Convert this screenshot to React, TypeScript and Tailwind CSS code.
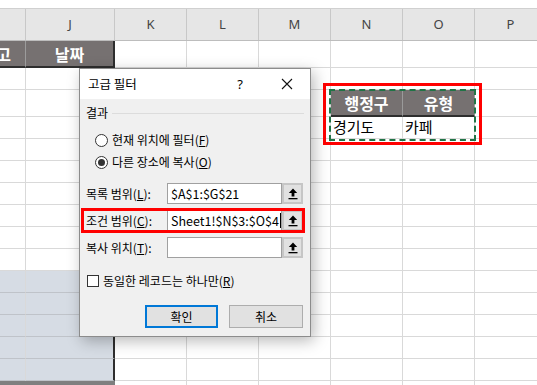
import React from "react";

const font = "font-['Noto_Sans_CJK_KR','Noto_Sans',sans-serif]";

const cols = [
  { key: "I", w: "w-[26px]", label: "" },
  { key: "J", w: "w-[89px]", label: "J" },
  { key: "K", w: "w-[72px]", label: "K" },
  { key: "L", w: "w-[72px]", label: "L" },
  { key: "M", w: "w-[72px]", label: "M" },
  { key: "N", w: "w-[72px]", label: "N" },
  { key: "O", w: "w-[72px]", label: "O" },
  { key: "P", w: "w-[72px]", label: "P" },
];

const rows = Array.from({ length: 16 }, (_, i) => i + 1);

const RefIcon = () => (
  <svg width="10" height="12" viewBox="0 0 10 12">
    <path d="M5 0.5 L9.2 5 H6.4 V8.6 H3.6 V5 H0.8 Z" fill="#000" />
    <rect x="0.5" y="10" width="9" height="1.3" fill="#000" />
  </svg>
);

const Cell = ({ r, c }: { r: number; c: number }) => {
  const w = cols[c].w;
  if (r === 1 && c === 0) {
    return (
      <div className={`${w} shrink-0 h-full bg-[#767171] border-r border-[#9c9c9c] border-b-2 border-b-[#2e2e2e] flex items-center justify-end pr-[14px] overflow-hidden whitespace-nowrap text-white font-bold text-[16px]`}>
        비고
      </div>
    );
  }
  if (r === 1 && c === 1) {
    return (
      <div className={`${w} shrink-0 h-full bg-[#767171] border-r-2 border-r-[#2e2e2e] border-b-2 border-b-[#2e2e2e] flex items-center justify-center text-white font-bold text-[16px]`}>
        날짜
      </div>
    );
  }
  if (r === 3 && (c === 5 || c === 6)) {
    return (
      <div className={`${w} shrink-0 h-full bg-[#767171] border-r border-r-[#9a9a9a] border-b-2 border-b-[#2e2e2e] flex items-center justify-center text-white font-bold text-[16px]`}>
        {c === 5 ? "행정구" : "유형"}
      </div>
    );
  }
  if (r === 4 && (c === 5 || c === 6)) {
    return (
      <div className={`${w} shrink-0 h-full border-r border-b border-[#d9d9d9] flex items-center pl-[2px] text-[15px] text-black`}>
        {c === 5 ? "경기도" : "카페"}
      </div>
    );
  }
  if (c <= 1 && r === 16) {
    return <div className={`${w} shrink-0 h-full bg-[#7f7f7f]`} />;
  }
  const shaded = c <= 1 && r >= 11;
  const right = c === 1 ? "border-r-2 border-r-[#2e2e2e]" : "border-r border-r-[#d9d9d9]";
  return (
    <div
      className={`${w} shrink-0 h-full border-b ${right} ${
        shaded ? "bg-[#d6dce4] border-b-[#bfc3c9]" : "bg-white border-b-[#d9d9d9]"
      }`}
    />
  );
};

const Radio = ({ on }: { on?: boolean }) => (
  <div className="w-[13px] h-[13px] rounded-full border border-[#333] bg-white flex items-center justify-center shrink-0">
    {on && <div className="w-[7px] h-[7px] rounded-full bg-[#333]" />}
  </div>
);

const FieldRow = ({
  label,
  k,
  value,
  caret,
}: {
  label: string;
  k: string;
  value?: string;
  caret?: boolean;
}) => (
  <div className="flex items-center h-[21px] pl-[6px] pr-[7px]">
    <div className="w-[81px] shrink-0 whitespace-nowrap">
      {label}(<span className="underline">{k}</span>):
    </div>
    <div className="w-[115px] h-full bg-white border border-[#a0a0a0] flex items-center pl-[3px] text-[12.5px] whitespace-nowrap overflow-hidden">
      {value}
      {caret && <span className="w-px h-[15px] bg-black ml-[1px]" />}
    </div>
    <div className="w-[21px] h-full bg-[#e1e1e1] border-2 border-[#c6c6c6] flex items-center justify-center">
      <RefIcon />
    </div>
  </div>
);

const App = () => {
  return (
    <div className={`relative w-[537px] h-[385px] overflow-hidden bg-white ${font}`}>
      <div className="h-[9px] border-b border-[#d0d0d0] bg-white" />
      <div className="flex h-[32px] bg-[#e6e6e6] border-b border-[#bdbdbd] text-[13px] text-[#444] font-['Noto_Sans',sans-serif]">
        {cols.map((col) => (
          <div key={col.key} className={`${col.w} shrink-0 h-full border-r border-[#c8c8c8] flex items-center justify-center`}>
            {col.label}
          </div>
        ))}
      </div>
      {rows.map((r) => (
        <div key={r} className={`flex ${r === 1 || r === 3 ? "h-[27px]" : "h-[22px]"}`}>
          {cols.map((col, c) => (
            <Cell key={col.key} r={r} c={c} />
          ))}
        </div>
      ))}

      {/* criteria range marked on sheet */}
      <div className="absolute left-[329px] top-[89px] w-[147px] h-[52px] border-2 border-dashed border-[#217346]" />
      <div className="absolute left-[323px] top-[83px] w-[159px] h-[62px] border-[3px] border-[#ff0000]" />

      {/* 고급 필터 dialog */}
      <div className="absolute left-[79px] top-[68px] w-[232px] h-[269px] bg-[#f0f0f0] border border-[#8c8c8c] shadow-[3px_4px_14px_rgba(0,0,0,0.28)] flex flex-col text-[12px] leading-[16px] text-black">
        <div className="h-[30px] bg-white flex items-center pl-[8px] pr-[13px] shrink-0">
          <span className="text-[12.5px]">고급 필터</span>
          <span className="ml-auto w-[20px] text-center text-[13px] font-['Noto_Sans',sans-serif]">?</span>
          <span className="ml-[27px] w-[20px] flex justify-center">
            <svg width="12" height="12" viewBox="0 0 12 12">
              <path d="M1 1 L11 11 M11 1 L1 11" stroke="#111" strokeWidth="1.1" />
            </svg>
          </span>
        </div>
        <div className="flex-1 flex flex-col">
          <div className="mt-[6px] flex items-center pl-[6px] pr-[6px]">
            <span>결과</span>
            <div className="flex-1 h-px bg-[#dcdcdc] ml-[4px]" />
          </div>
          <div className="mt-[8px] flex items-center h-[22px] pl-[15px]">
            <Radio />
            <span className="ml-[4px]">
              현재 위치에 필터(<span className="underline">F</span>)
            </span>
          </div>
          <div className="flex items-center h-[22px] pl-[15px]">
            <Radio on />
            <span className="ml-[4px]">
              다른 장소에 복사(<span className="underline">O</span>)
            </span>
          </div>
          <div className="mt-[10px] flex flex-col gap-[6px]">
            <FieldRow label="목록 범위" k="L" value="$A$1:$G$21" />
            <FieldRow label="조건 범위" k="C" value="Sheet1!$N$3:$O$4" caret />
            <FieldRow label="복사 위치" k="T" />
          </div>
          <div className="mt-[15px] flex items-center h-[16px] pl-[7px]">
            <div className="w-[12px] h-[12px] border border-[#333] bg-white shrink-0" />
            <span className="ml-[4px]">
              동일한 레코드는 하나만(<span className="underline">R</span>)
            </span>
          </div>
          <div className="mt-[16px] flex justify-end gap-[11px] pr-[7px]">
            <div className="w-[73px] h-[23px] bg-[#e1e1e1] border-2 border-[#0078d7] flex items-center justify-center">
              확인
            </div>
            <div className="w-[74px] h-[23px] bg-[#e1e1e1] border border-[#adadad] flex items-center justify-center">
              취소
            </div>
          </div>
        </div>
        <div className="absolute left-[1px] top-[139px] w-[224px] h-[25px] border-[3px] border-[#ff0000]" />
      </div>
    </div>
  );
};

export default App;
